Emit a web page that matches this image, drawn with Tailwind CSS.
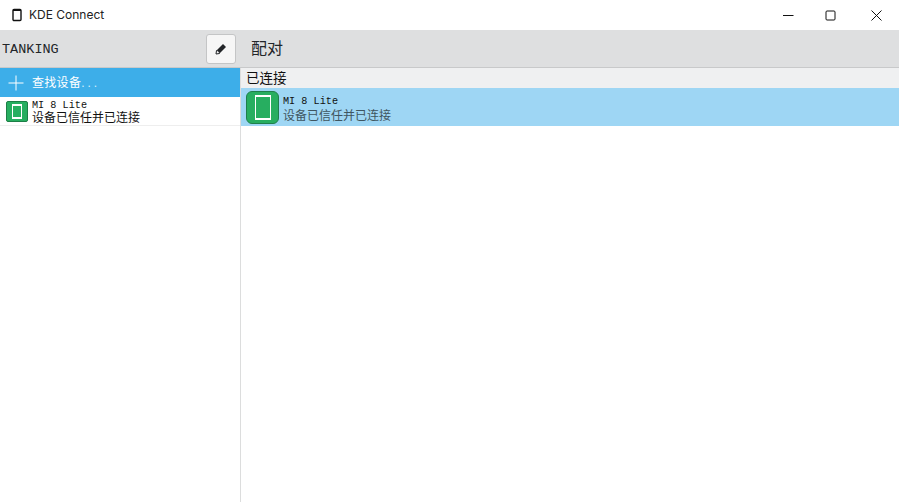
<!DOCTYPE html>
<html><head><meta charset="utf-8"><script src="https://cdn.jsdelivr.net/npm/@tailwindcss/browser@4"></script></head>
<body class="bg-white overflow-hidden">
<div class="w-[899px] h-[502px] flex flex-col bg-white text-[#232629] font-['Liberation_Sans','Noto_Sans_CJK_SC',sans-serif]">
  <div class="h-[30px] flex items-center bg-white shrink-0">
    <svg class="ml-[11px] w-[12px] h-[14px]" viewBox="0 0 12 14"><rect x="2" y="1.5" width="8" height="11" rx="1" fill="none" stroke="#111" stroke-width="1.4"/><rect x="2" y="1" width="8" height="2" fill="#111"/></svg>
    <span class="ml-[6px] text-[12px] font-['Inter','Noto_Sans',sans-serif] text-[#222]">KDE Connect</span>
    <div class="ml-auto flex items-center">
      <svg class="w-[11px] h-[11px] mr-[31px]" viewBox="0 0 11 11"><path d="M0 5.5H10.5" stroke="#111" stroke-width="1"/></svg>
      <svg class="w-[11px] h-[11px] mr-[35px]" viewBox="0 0 11 11"><rect x="1" y="1" width="9" height="9" rx="1" fill="none" stroke="#111" stroke-width="1"/></svg>
      <svg class="w-[11px] h-[11px] mr-[17px]" viewBox="0 0 11 11"><path d="M0.5 0.5L10.5 10.5M10.5 0.5L0.5 10.5" stroke="#111" stroke-width="1"/></svg>
    </div>
  </div>
  <div class="h-[38px] flex items-center bg-[#dedfe0] border-b border-[#c8c9ca] shrink-0">
    <div class="w-[240px] flex items-center justify-between shrink-0 pr-[4px]">
      <span class="ml-[2px] text-[13.5px] font-['Liberation_Mono',monospace] pt-[4px]">TANKING</span>
      <div class="w-[30px] h-[30px] bg-[#f6f6f6] border border-[#c4c5c6] rounded-[3px] flex items-center justify-center">
        <svg class="w-[12px] h-[12px]" viewBox="0 0 12 12"><path d="M1.5 7.5L1 11L4.5 10.5L4 8Z" fill="none" stroke="#232629" stroke-width="1"/><path d="M8 1L11 4L5 10L2 7Z" fill="#232629"/></svg>
      </div>
    </div>
    <span class="ml-[11px] text-[16px] pt-[1px]">配对</span>
  </div>
  <div class="flex-1 flex min-h-0">
    <div class="w-[241px] shrink-0 border-r border-[#dcdddd] flex flex-col">
      <div class="h-[29px] bg-[#3daee9] flex items-center text-white">
        <svg class="ml-[8px] w-[16px] h-[16px]" viewBox="0 0 16 16"><path d="M8 0.5V15.5M0.5 8H15.5" stroke="#fff" stroke-width="1"/></svg>
        <span class="ml-[8px] text-[12px] tracking-[0.3px]">查找设备<span class="tracking-[3px] opacity-80">...</span></span>
      </div>
      <div class="h-[29px] flex items-center border-b border-[#eeeeee]">
        <div class="ml-[6px] w-[22px] h-[21px] bg-[#27ae60] border border-[#1d7f47] rounded-[2px] flex items-center justify-center">
          <div class="w-[10px] h-[15px] border border-white border-t-2 border-b-2"></div>
        </div>
        <div class="ml-[4px] flex flex-col pt-[3px]">
          <span class="text-[10.2px] leading-[10px] font-['Liberation_Mono',monospace] text-[#111] pt-[1px]">MI 8 Lite</span>
          <span class="text-[12px] leading-[14px] text-[#111]">设备已信任并已连接</span>
        </div>
      </div>
    </div>
    <div class="flex-1 flex flex-col">
      <div class="h-[20px] bg-[#eff0f1] flex items-center pl-[5px] pt-[2px] text-[13.5px] text-[#111]">已连接</div>
      <div class="h-[38px] bg-[#9ed6f4] flex items-center">
        <div class="ml-[5px] w-[33px] h-[33px] bg-[#27ae60] border border-[#1f7f4b] rounded-[6px] flex items-center justify-center">
          <div class="w-[16px] h-[25px] border-[1.5px] border-white border-t-[2.5px] border-b-[2.5px]"></div>
        </div>
        <div class="ml-[4px] flex flex-col pt-[6px]">
          <span class="text-[10.2px] leading-[12px] font-['Liberation_Mono',monospace] text-[#111]">MI 8 Lite</span>
          <span class="text-[12px] leading-[17px] text-[#3f5560]">设备已信任并已连接</span>
        </div>
      </div>
    </div>
  </div>
</div>
</body></html>
